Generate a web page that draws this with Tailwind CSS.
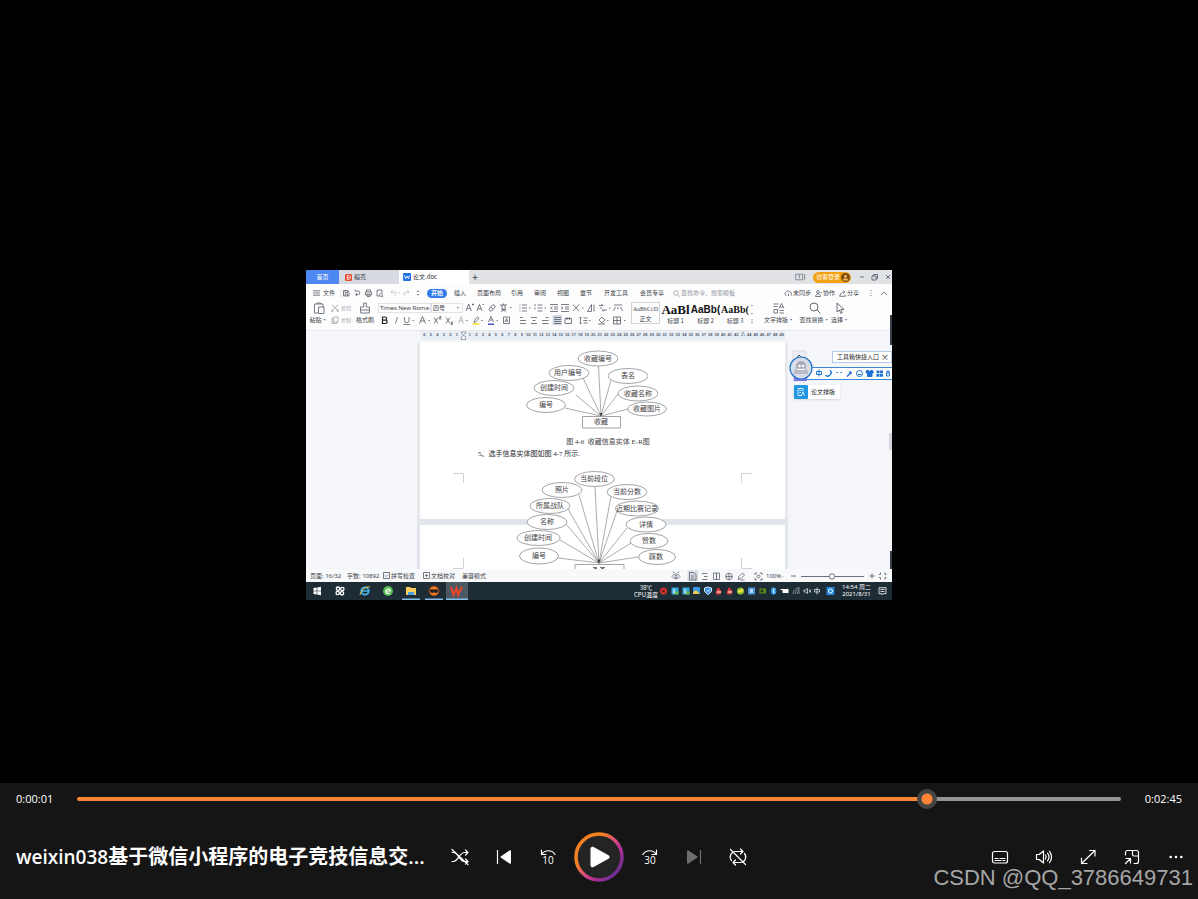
<!DOCTYPE html>
<html lang="zh-CN">
<head>
<meta charset="utf-8">
<meta name="viewport" content="width=device-width, initial-scale=1">
<title>Media Player</title>
<script src="https://cdn.jsdelivr.net/npm/@tailwindcss/browser@4"></script>
</head>
<body class="flex h-screen flex-col overflow-hidden bg-black font-['Open_Sans','Noto_Sans_CJK_SC',sans-serif] text-white">

<main class="flex min-h-0 flex-1 items-center justify-center pt-[87px]">
  <!-- Video frame: recorded desktop with a document editor -->
  <section class="flex h-[330px] w-[586px] flex-col overflow-hidden bg-[#fdfdfe] font-['Noto_Sans_CJK_SC',sans-serif] text-[6px] leading-[8px] whitespace-nowrap text-[#3b3f48]" aria-label="视频画面">

    <!-- Tab strip -->
    <div class="flex h-[14px] shrink-0 items-center bg-[#e0e2e5]">
      <button class="h-full w-[33px] bg-[#4d87f2] text-white">首页</button>
      <button class="flex h-full w-[60px] items-center gap-[2px] bg-[#d7dae0] pl-[6px]">
        <svg class="size-[7px]" viewBox="0 0 7 7"><rect width="7" height="7" rx="1.5" fill="#e5482f"/><path d="M2.3 1.5h1.2a2 2 0 0 1 0 4H2.3zM2.3 3.5h2" fill="none" stroke="#fff" stroke-width=".8"/></svg>
        稻壳
      </button>
      <button class="flex h-full w-[70px] items-center gap-[2px] bg-white pl-[4px] text-[#23262c]">
        <svg class="size-[8px]" viewBox="0 0 8 8"><rect width="8" height="8" rx="1" fill="#2272e6"/><path d="M1.4 2.4 2.6 5.6 4 3l1.4 2.6 1.2-3.2" fill="none" stroke="#fff" stroke-width=".9"/></svg>
        论文.doc
      </button>
      <button class="w-[12px] text-[10px] leading-[12px]">+</button>
      <div class="ml-auto flex items-center">
        <svg class="mr-[7px] h-[8px] w-[11px]" viewBox="0 0 11 8" fill="none" stroke="#6e7786" stroke-width=".8"><path d="M.7 1.2h7v5.6h-7zM9.6 1.2v5.6M3.6 2.8l.8-.4v3"/></svg>
        <button class="mr-[9px] flex h-[11px] w-[38px] items-center justify-between rounded-full bg-[#f5a211] pr-[1px] pl-[3px] text-white">访客登录
          <svg class="size-[9px]" viewBox="0 0 9 9"><circle cx="4.500" cy="4.500" r="4.500" fill="#7b4a10"/><circle cx="4.500" cy="3.300" r="1.500" fill="#f0b756"/><path d="M1.800 7.500a2.700 2.300 0 0 1 5.400 0" fill="#f0b756"/></svg>
        </button>
        <svg class="h-[8px] w-[32px]" viewBox="0 0 32 8" fill="none" stroke="#596273" stroke-width=".9"><path d="M0 4h4M12 3h4v4h-4zM13.500 3V1.500h4v4H16M26 2l4 4M30 2l-4 4"/></svg>
      </div>
    </div>

    <!-- Menu row -->
    <div class="flex h-[17px] shrink-0 items-center pt-[1px]">
      <button class="flex w-[34px] items-center gap-[3px] pl-[7px]">
        <svg class="h-[6px] w-[7px]" viewBox="0 0 7 6" stroke="#555b66" stroke-width=".8"><path d="M0 .8h7M0 3h7M0 5.200h7"/></svg>文件
      </button>
      <svg class="h-[10px] w-[87px] shrink-0" viewBox="34 0 87 10" fill="none" stroke="#5a606b" stroke-width=".8">
        <path d="M35 1v8" stroke="#d5d8dd"/>
        <path d="M37.500 2.500h4l1.500 1.500v4h-5.500zM39 2.500v2h2.500v-2M39 8V6h2.500v2"/>
        <path d="M49 3h3a1.800 1.800 0 0 1 0 3.600h-2M51 5l-1.500 1.600L51 8.200M49 3V1.800"/>
        <path d="M60.500 4V2h4v2M59.500 4h6v3h-6zM61 6h3v2.500h-3z"/>
        <path d="M76 5V2h-5v6h3M75 5.500a1.500 1.500 0 1 0 .1 0M76 8l1.200 1"/>
        <g stroke="#b9bdc5"><path d="M85 4h3.500a1.600 1.600 0 0 1 0 3.200M86.500 2.300 85 4l1.500 1.700M103 4h-3.500a1.600 1.600 0 0 0 0 3.200M101.500 2.300 103 4l-1.500 1.700M92 4.500h2"/></g>
        <path d="M111 4l1.200-1.200L113.400 4M111 6l1.200 1.200L113.400 6"/>
      </svg>
      <button class="mr-[7px] h-[9px] w-[20px] rounded-full bg-[#3179e8] font-bold text-white">开始</button>
      <button class="w-[23px] text-left">插入</button>
      <button class="w-[34px] text-left">页面布局</button>
      <button class="w-[23px] text-left">引用</button>
      <button class="w-[23px] text-left">审阅</button>
      <button class="w-[23px] text-left">视图</button>
      <button class="w-[24px] text-left">章节</button>
      <button class="w-[36px] text-left">开发工具</button>
      <button class="w-[33px] text-left">会员专享</button>
      <label class="flex w-[80px] items-center gap-[1px] text-[#8d929b]">
        <svg class="size-[7px]" viewBox="0 0 7 7" fill="none" stroke="#8d929b" stroke-width=".7"><circle cx="3" cy="3" r="2.300"/><path d="m4.700 4.700 2 2"/></svg>
        <input class="w-[60px] placeholder:text-[#8d929b]" placeholder="查找命令、搜索模板">
      </label>
      <div class="ml-auto flex items-center gap-[4px] pr-[3px]">
        <button class="flex items-center gap-[1px]"><svg class="size-[8px]" viewBox="0 0 8 8" fill="none" stroke="#5a606b" stroke-width=".8"><path d="M2.500 6.500a1.800 1.800 0 0 1-.2-3.500 2.200 2.200 0 0 1 4 .4 1.500 1.500 0 0 1 .3 3M4.500 4.500v2.500"/></svg>未同步</button>
        <button class="flex items-center gap-[1px]"><svg class="size-[7px]" viewBox="0 0 7 7" fill="none" stroke="#5a606b" stroke-width=".8"><circle cx="3" cy="2" r="1.400"/><path d="M.6 6.500c0-3.500 5-3.500 5 0zM5.500 2.500h1.500"/></svg>协作</button>
        <button class="flex items-center gap-[1px]"><svg class="size-[7px]" viewBox="0 0 7 7" fill="none" stroke="#5a606b" stroke-width=".8"><path d="M1.500 3.500.7 6.300h5.600L6 4.500M2 4.500C2.500 2.500 4 2 5.500 2M4.300.6 5.800 2 4.300 3.400"/></svg>分享</button>
        <svg class="ml-[6px] h-[8px] w-[20px]" viewBox="0 0 20 8" fill="none" stroke="#5a606b" stroke-width=".8"><path d="M2 1v1M2 3.500v1M2 6v1M12 6l3-3 3 3"/></svg>
      </div>
    </div>

    <!-- Ribbon -->
    <div class="flex h-[30px] shrink-0 border-b border-[#e6e8ec] pt-[1px] text-[5px]">
      <button class="flex w-[25px] flex-col items-center gap-[2px] text-[6px]">
        <svg class="h-[12px] w-[12px]" viewBox="0 0 12 12" fill="none" stroke="#666c77" stroke-width=".9"><path d="M5 11H1.500V2H10v3M4 2V1h3.500v1M5.500 5H11v6.500H5.500z"/></svg>粘贴·
      </button>
      <div class="flex w-[23px] flex-col gap-[4px] pt-[2px] text-[#a3a7ae]">
        <button class="flex items-center gap-[2px]"><svg class="size-[8px]" viewBox="0 0 8 8" fill="none" stroke="#999ea7" stroke-width=".8"><path d="m1 1 6 5.500M7 1 1 6.500"/><circle cx="1.300" cy="6.800" r=".8"/><circle cx="6.700" cy="6.800" r=".8"/></svg>剪切</button>
        <button class="flex items-center gap-[2px]"><svg class="size-[8px]" viewBox="0 0 8 8" fill="none" stroke="#999ea7" stroke-width=".8"><path d="M2.500 1h4.500v5H2.500zM2.500 2.500H1v5h4.500V6"/></svg>复制</button>
      </div>
      <button class="flex w-[22px] flex-col items-center gap-[2px] text-[6px]">
        <svg class="h-[12px] w-[12px]" viewBox="0 0 12 12" fill="none" stroke="#666c77" stroke-width=".9"><path d="M4.700 1h2.600v4h3.200v3h-9V5h3.200zM1.700 8v3h8.600V8"/></svg>格式刷
      </button>
      <div class="flex w-[252px] flex-col pl-[2px]">
        <div class="flex h-[12px] items-center">
          <button class="flex h-[10px] w-[53px] items-center justify-between border border-[#e2e4e8] pl-[1px] font-['Noto_Sans','Noto_Sans_CJK_SC',sans-serif] text-[6px]">Times New Roma<span>·</span></button>
          <button class="flex h-[10px] w-[32px] items-center justify-between border border-[#e2e4e8] pr-[1px] pl-[1px] text-[6px]">四号<span>·</span></button>
          <svg class="h-[12px] w-[165px]" viewBox="463 302 165 12" fill="none" stroke="#565c67" stroke-width=".8">
            <path d="m466 311 2.700-7 2.700 7M467 308.500h3.500M472 304.500h2M473 303.500v2M477 311l2.500-6.500 2.500 6.500M478 308.700h3M482.500 304.500h1.500M489 309l4-4.500 2.500 2-4 4.500h-1.500zM490.500 307l2.500 2M500 305h7M502 305v3M505 305v3M503.500 303.500v1.500M501 309h5l-5 2.500M502 309l4 2.500M510 307.500h1.500"/>
            <path d="M519.500 305h1M519.500 308h1M519.500 311h1M522 305h5M522 308h5M522 311h5M529 308h1.500M535 304v2M535 307.500v2M537.500 305h5M537.500 308h5M537.500 311h5M544.500 308h1.500M550 304.500h8M554 307h4M554 309h4M550 311.500h8M552.500 306.500 550.500 308l2 1.500M561 304.500h8M565 307h4M565 309h4M561 311.500h8M561 306.500l2 1.500-2 1.500M573 304.500l6 6.500M579 304.500l-6 6.500M582 308h1.500M587.500 311.500l4-7v7zM594 304.500v7M599 305.500h4l-1.500-1.500M607 310h-5l1.500 1.500M601 309v-2M609 308h1.500M614 305h8M614 308h2M617 308h2M620 308h2M614 311v-2M622 311v-2"/>
          </svg>
        </div>
        <div class="flex h-[12px] items-center">
          <svg class="h-[12px] w-[250px]" viewBox="378 313 250 12" fill="none" stroke="#565c67" stroke-width=".8">
            <path d="M382.500 316h2.500a1.500 1.500 0 0 1 0 3.200h-2.500zM382.500 319.200h3a1.600 1.600 0 0 1 0 3.300h-3z" stroke="#222" stroke-width="1.200"/>
            <path d="m397.500 316-2 6.500M404.500 316v3.500a2.200 2.200 0 0 0 4.500 0V316M403.500 323.500h6.500M412.500 319.500h1.500M419.500 322.500l3-7 3 7M420.500 320h4M428.500 319.500h1.500M434 316.500l4 6M438 316.500l-4 6M439.500 315.500h1.500v1.200h-1.500v1.300h1.800M446 316.500l4 6M450 316.500l-4 6M451 321h1.500v1.200H451v1.300h1.800"/>
            <path d="m458.500 322.500 2.500-7 2.500 7M459.500 320h3" stroke="#a9adb4"/><path d="M466 319.500h1.500M481 319.500h1.500M496.500 319.500h1.500"/>
            <path d="m474 320 3.500-4 1.500 1.300-3.500 4h-1.500z"/><path d="M472.500 323h7" stroke="#f0e51a" stroke-width="1.500"/>
            <path d="m488.500 321 2.500-5.500 2.500 5.500M489.500 319h3"/><path d="M488 323.200h6" stroke="#2635b5" stroke-width="1.300"/>
            <path d="M503.500 316h6v6.500h-6zM505 321l1.500-3.500L508 321M505.500 320h2"/>
            <path d="M552.500 314h9.500v10h-9.500z" fill="#d3d8e2" stroke="none"/>
            <path d="M520 316.500h3M520 319.500h6M520 322.500h6M531 316.500h6M532.500 319.500h3M531 322.500h6M545.500 316.500h3M542 319.500h6.500M542 322.500h6.500M554 316.500h7M554 318.500h7M554 320.500h7M554 322.500h7M565 322.500v-5h6.500v5zM567 316v3M569.500 316v3M580.500 316v7M579.500 317l1-1 1 1M579.500 322l1 1 1-1M583.500 317h4M583.500 319.500h4M583.500 322h4M589 319.500h1.500M599 319l3-3 3 3-3 3zM598 323h7M607 319.500h1.500M613.500 316h7v7h-7zM617 316v7M613.500 319.500h7M624 319.500h1.500"/>
          </svg>
        </div>
      </div>
      <div class="flex w-[129px] gap-[1px] pl-[3px] text-[6px]">
        <button class="flex h-[22px] w-[29px] flex-col items-center justify-end overflow-hidden border border-[#d2d5da] font-['Liberation_Serif','Noto_Sans_CJK_SC',serif]"><span class="h-[10px]">AaBbCcD</span><span class="font-['Noto_Sans_CJK_SC',sans-serif]">正文</span></button>
        <button class="flex w-[29px] flex-col items-center overflow-hidden text-[#111]"><span class="h-[15px] font-['Liberation_Serif',serif] text-[13px] leading-[16px] font-bold">AaBl</span><span class="text-[#3b3f48]">标题 1</span></button>
        <button class="flex w-[29px] flex-col items-center overflow-hidden text-[#111]"><span class="h-[15px] font-['Liberation_Sans',sans-serif] text-[10px] leading-[15px] font-bold">AaBb(</span><span class="text-[#3b3f48]">标题 2</span></button>
        <button class="flex w-[28px] flex-col items-center overflow-hidden text-[#111]"><span class="h-[15px] font-['Liberation_Serif',serif] text-[10px] leading-[15px] font-bold">AaBb(</span><span class="text-[#3b3f48]">标题 3</span></button>
        <svg class="h-[22px] w-[4px]" viewBox="0 0 4 22" fill="none" stroke="#777d88" stroke-width=".7"><path d="m1 4 1-1 1 1M1 11l1 1 1-1M1 18h2M1 20l1 1 1-1"/></svg>
      </div>
      <button class="flex w-[44px] flex-col items-center gap-[2px] text-[6px]">
        <svg class="size-[12px]" viewBox="0 0 12 12" fill="none" stroke="#565c67" stroke-width=".8"><path d="M.5 2h5M.5 4.500h4M6 6.500l2.500-5 2.500 5M7 5h3M1 7.500h3.500V11H1zM6.500 8.500H11M6.500 11H11"/></svg>文字排版·
      </button>
      <button class="flex w-[27px] flex-col items-center gap-[2px] text-[6px]">
        <svg class="size-[12px]" viewBox="0 0 12 12" fill="none" stroke="#565c67" stroke-width=".9"><circle cx="5" cy="5" r="4"/><path d="m8 8 3.500 3.500"/></svg>查找替换·
      </button>
      <button class="flex w-[24px] flex-col items-center gap-[2px] text-[6px]">
        <svg class="size-[12px]" viewBox="0 0 12 12" fill="none" stroke="#565c67" stroke-width=".9"><path d="M3 1v9l2.300-2 1.600 3.500 1.400-.7L6.800 7.500H10z"/></svg>选择·
      </button>
    </div>

    <!-- Ruler -->
    <div class="flex h-[9px] shrink-0 bg-[#f4f6f9] pl-[115px] text-center font-['Liberation_Sans',sans-serif] text-[4px] leading-[8px] font-bold text-[#555b6a]">
      <div class="grid w-[364px] grid-cols-56 bg-[#e9edf5]">
        <span>6</span><span>5</span><span>4</span><span>3</span><span>2</span><span>1</span>
        <svg class="h-[9px] w-[7px]" viewBox="0 0 7 9" fill="#fff" stroke="#6b7280" stroke-width=".7"><path d="M1.500 1h4v1.500l-2 1.500-2-1.500zM1.500 8.500V6l2-1.500 2 1.500v2.500z"/></svg>
        <span>1</span><span>2</span><span>3</span><span>4</span><span>5</span><span>6</span><span>7</span><span>8</span><span>9</span><span>10</span><span>11</span><span>12</span><span>13</span><span>14</span><span>15</span><span>16</span><span>17</span><span>18</span><span>19</span><span>20</span><span>21</span><span>22</span><span>23</span><span>24</span><span>25</span><span>26</span><span>27</span><span>28</span><span>29</span><span>30</span><span>31</span><span>32</span><span>33</span><span>34</span><span>35</span><span>36</span><span>37</span><span>38</span><span>39</span><span>40</span><span>41</span><span>42</span><span>△</span><span>44</span><span>45</span><span>46</span><span>47</span><span>48</span><span>49</span>
      </div>
    </div>

    <!-- Document pages with entity diagrams -->
    <div class="relative h-[229px] shrink-0 bg-[#f4f6f9]">
      <svg class="h-[229px] w-[586px] font-['Liberation_Serif','Noto_Sans_CJK_SC',serif]" viewBox="306 340 586 229">
        <path d="M417 343h371v177H417z" fill="#e7e9ed"/><path d="M417 519h371v50H417z" fill="#e1e4e8"/>
        <path d="M420 342h365v177H420zM420 525h365v44H420zM527 516h135v12H527z" fill="#fff"/>
        <g fill="none" stroke="#c6c8cc" stroke-width=".8"><path d="M453 473.500h10.500V483M752 473.500h-10.500V483M463.500 558v10M741.500 558v10M453 568.500h10.500M752 568.500h-10.500"/></g>
        <g fill="none" stroke="#85888d" stroke-width=".7">
          <path d="M601 416 598.500 366M601 416 583 378M601 416 576 395M601 416 565 408M601 416 611 380M601 416 618 394M601 416 628 409"/>
          <path d="M599 563 595 487M599 563 579 495M599 563 568 509M599 563 566 524M599 563 560 540M599 563 558 558M599 563 611 496M599 563 617 511M599 563 627 528M599 563 631 543M599 563 638 557"/>
        </g>
        <path d="M599.500 413 601 416.500 602.500 413zM597.500 559.500l1.500 4.500 1.500-4.500z" fill="#444"/>
        <g fill="#fff" stroke="#8b8e93" stroke-width=".8">
          <ellipse cx="598" cy="358.500" rx="20" ry="7.500"/><ellipse cx="569" cy="373" rx="20" ry="7.500"/><ellipse cx="554" cy="388" rx="20" ry="7.500"/><ellipse cx="546" cy="405" rx="19.500" ry="7.500"/><ellipse cx="628" cy="376" rx="20" ry="7.500"/><ellipse cx="638" cy="393.500" rx="20" ry="7.500"/><ellipse cx="647" cy="409" rx="19.500" ry="7"/>
          <path d="M582.500 416.500h38V428h-38zM575 569v-4.500h49v4.500"/>
          <ellipse cx="594.500" cy="479" rx="20" ry="7.500"/><ellipse cx="562" cy="490" rx="20" ry="7.500"/><ellipse cx="550" cy="506" rx="20" ry="7.500"/><ellipse cx="547" cy="522" rx="20" ry="7.500"/><ellipse cx="538.500" cy="538" rx="21.500" ry="7.500"/><ellipse cx="539" cy="556" rx="19.500" ry="8"/><ellipse cx="627" cy="492" rx="20" ry="7.500"/><ellipse cx="637" cy="508.500" rx="21.500" ry="7.500"/><ellipse cx="646" cy="524.500" rx="20" ry="7.500"/><ellipse cx="649" cy="541" rx="19" ry="7.500"/><ellipse cx="657" cy="557" rx="18.500" ry="7.500"/>
        </g>
        <g class="text-[7px]" text-anchor="middle" fill="#3f4145">
          <text x="598" y="361">收藏编号</text><text x="568" y="375">用户编号</text><text x="554" y="390">创建时间</text><text x="546" y="407">编号</text><text x="628" y="378">表名</text><text x="638" y="396">收藏名称</text><text x="647" y="411">收藏图片</text><text x="601" y="424">收藏</text>
          <text x="594" y="481">当前段位</text><text x="562" y="492">照片</text><text x="550" y="508">所属战队</text><text x="547" y="524">名称</text><text x="538" y="540">创建时间</text><text x="539" y="558">编号</text><text x="627" y="494">当前分数</text><text x="637" y="511">近期比赛记录</text><text x="646" y="527">详情</text><text x="649" y="543">赞数</text><text x="656" y="559">踩数</text>
          <text x="608" y="444">图 4-6&#160; 收藏信息实体 E-R图</text>
        </g>
        <path d="M593 567.500h4M594 568.500h3M600 567.500h5M601 568.500h3" stroke="#55585e" stroke-width=".8"/>
        <text class="text-[7px]" x="478" y="456" fill="#26282c">5、选手信息实体图如图 4-7 所示.</text>
      </svg>
      <!-- Floating helpers -->
      <div class="absolute top-[11px] right-0 flex h-[12px] w-[60px] items-center justify-between border border-[#b5cbe6] bg-white pr-[2px] pl-[4px] text-[#222]">工具箱快捷入口<button class="text-[8px]" aria-label="关闭">×</button></div>
      <div class="absolute top-[27px] right-0 h-[13px] w-[94px] rounded-l-full border border-r-0 border-[#3d86d6] bg-white">
        <svg class="h-[11px] w-[93px]" viewBox="799 368 93 11" fill="none" stroke="#1e73d2" stroke-width="1"><path d="M816.500 371.500h5v3h-5zM819 369.500v7M836.500 372.500h1.500M840.500 372.500h1.500"/><path d="M830 370a3.400 3.400 0 0 1-4.500 5.500c3 2 7.500-1.500 4.500-5.500zM866.500 370.500h1.500l1.500 1 1.500-1h1.500l1 2-1.500 1v3h-4.500v-3l-1.500-1z" fill="#1e73d2"/><path d="m847 376.500 3.500-3.500M850 371v2h2" stroke-width="1.500"/><circle cx="859.500" cy="373.500" r="3"/><path d="M858 374.500h3M886.500 373h3v3h-3zM887 373v-2h2v2"/><path d="M876.500 370.500h3v2.700h-3zM880 370.500h3v2.700h-3zM876.500 374h3v2.700h-3zM880 374h3v2.700h-3z" fill="#1e73d2" stroke="none"/></svg>
      </div>
      <svg class="absolute top-[10px] left-[483px] h-[32px] w-[26px]" viewBox="789 350 26 32"><rect x="793" y="351" width="13" height="30" rx="1" fill="#eceef3" stroke="#d0d3da" stroke-width=".7"/><path d="M794 377h13v4h-13z" fill="#8677e8"/><path d="m797 357 2-2 2 2" fill="none" stroke="#555"/><circle cx="801" cy="368" r="11" fill="#d9dde8" stroke="#1e73c8" stroke-width="1.200"/><path d="M794 372a7 5 0 0 1 14 0v2h-14z" fill="#b9b9c6"/><path d="M796 368v-2a5 5 0 0 1 10 0v2z" fill="#a9a9b8"/><circle cx="799.500" cy="366" r="1.300" fill="#fff"/><circle cx="803" cy="366" r="1.300" fill="#fff"/><path d="M797 369.500h8" stroke="#fff"/></svg>
      <button class="absolute top-[45px] left-[488px] flex h-[14px] w-[46px] items-center gap-[3px] bg-white text-[#222] shadow">
        <svg class="size-[14px]" viewBox="0 0 14 14"><rect width="14" height="14" rx="1" fill="#2196e3"/><path d="M8 10.500H4v-7h5v3M5.500 5.500h2M5.500 7.500h1.500M7.500 10.500 9 7l1.500 3.500" fill="none" stroke="#fff" stroke-width=".8"/></svg>论文排版
      </button>
      <div class="absolute top-[-25px] right-0 h-[30px] w-[2px] bg-[#35404a]"></div>
      <div class="absolute top-[93px] right-0 h-[17px] w-[3px] bg-[#d3d6db]"></div>
      <div class="absolute right-0 bottom-0 h-[18px] w-[2px] bg-[#35404a]"></div>
    </div>

    <!-- Status bar -->
    <div class="flex h-[13px] shrink-0 items-center bg-[#f8f9fb] pl-[4px] text-[6px]">
      <span class="w-[37px] font-['Noto_Sans','Noto_Sans_CJK_SC',sans-serif]">页面: 16/32</span>
      <span class="w-[36px] font-['Noto_Sans','Noto_Sans_CJK_SC',sans-serif]">字数: 10892</span>
      <button class="flex w-[40px] items-center gap-[1px]"><svg class="size-[7px]" viewBox="0 0 7 7" fill="none" stroke="#555b66" stroke-width=".8"><path d="M.5.5h6v6h-6zM2 3.500l1 1 2-2"/></svg>拼写检查</button>
      <button class="flex w-[39px] items-center gap-[1px]"><svg class="size-[7px]" viewBox="0 0 7 7" fill="none" stroke="#555b66" stroke-width=".8"><path d="M.5.5h6v6h-6zM2 3.500h3M3.500 2v3"/></svg>文档校对</button>
      <button>兼容模式</button>
      <svg class="ml-auto h-[12px] w-[92px]" viewBox="671 569 92 12" fill="none" stroke="#5b616d" stroke-width=".8">
        <path d="M687.500 569.500h10.500v11h-10.500z" fill="#d6dae2" stroke="none"/>
        <path d="M672 575.500c2-3.500 6-3.500 8 0-2 3-6 3-8 0zM674 572l-.7-1.500M678 572l.7-1.500"/><circle cx="676" cy="575.500" r="1.200"/>
        <path d="M689.500 571.500h4l2.500 2v5.500h-6.500zM691 575h3M691 577h3M702 572.500h5.500M704 575.500h3.500M702 578.500h5.500M713.500 572h3v6.500h-3zM716.500 572h3v6.500h-3z"/>
        <circle cx="729" cy="575.500" r="3.300"/><path d="M725.500 575.500h7M729 572v7M738 578.500l1-3 3.500-3.500 2 2-3.500 3.500zM740.500 579h4M755 572v2M755 572h2M762 572h-2M762 572v2M755 579v-2M755 579h2M762 579v-2M762 579h-2"/><circle cx="758.500" cy="575.500" r="1.500"/>
      </svg>
      <span class="ml-[3px] w-[22px] font-['Noto_Sans',sans-serif]">100% ·</span>
      <svg class="h-[8px] w-[104px]" viewBox="788 571 104 8" fill="none" stroke="#5b616d" stroke-width=".9"><path d="M791 575h5M801 575.500h63M869.500 575h5M872 572.500v5M880.500 571.500v2h-1.500M885 571.500v2h1.500M880.500 578.500v-2h-1.500M885 578.500v-2h1.500"/><circle cx="832" cy="575.500" r="2.700" fill="#fff"/></svg>
    </div>

    <!-- Taskbar -->
    <div class="flex h-[18px] shrink-0 items-center bg-[#1e2c35] text-white">
      <svg class="h-[18px] w-[166px]" viewBox="306 582 166 18">
        <path d="M446 582h22v18h-22z" fill="#4d5962"/><path d="M402 598.500h18v1.500h-18zM425 598.500h18v1.500h-18zM446 598.500h22v1.500h-22z" fill="#86bce9"/>
        <path d="m313.500 588 3.200-.5v3.200h-3.200zM317.300 587.400l3.700-.6v3.900h-3.700zM313.500 591.300h3.200v3.200l-3.200-.5zM317.300 591.300h3.700v3.900l-3.700-.6z" fill="#fff"/>
        <g fill="none" stroke="#fff" stroke-width="1.300"><circle cx="338" cy="588.700" r="1.700"/><circle cx="342.300" cy="589" r="1.700"/><circle cx="342" cy="593.300" r="1.700"/><circle cx="337.700" cy="593" r="1.700"/></g>
        <circle cx="365" cy="591" r="3.700" fill="none" stroke="#46b7ec" stroke-width="1.800"/><path d="M362 591h6" stroke="#46b7ec" stroke-width="1.500"/><path d="M360 595c1-5 6-9 10-8" fill="none" stroke="#edc648"/>
        <circle cx="388" cy="591" r="5" fill="#55bc50"/><path d="M386 591h4.500a2.300 2.300 0 1 0-.8 2" fill="none" stroke="#fff" stroke-width="1.200"/>
        <path d="M406 587h4l1 1h5v7h-10z" fill="#f7ce5b"/><path d="M408 592h6v3h-6z" fill="#4aa0e0"/>
        <circle cx="434" cy="591" r="5" fill="#ef7b25"/><path d="M429.500 589.500h9l-1 3-2.500.4-1-1-1 1-2.500-.4z" fill="#202020"/><circle cx="434" cy="591" r="5" fill="none" stroke="#67331b" stroke-width=".8"/>
        <path d="m451 587 2.500 8 3-7 1.500 7 4-8" fill="none" stroke="#ed4528" stroke-width="2"/>
      </svg>
      <div class="ml-auto flex w-[24px] flex-col items-center text-[6px] leading-[7px]"><span>38℃</span><span>CPU温度</span></div>
      <svg class="mr-[6px] h-[18px] w-[178px]" viewBox="657 582 178 18">
        <circle cx="662.500" cy="591" r="3.500" fill="#d6342e"/><path d="M661 589.500l3 3M664 589.500l-3 3" stroke="#3c1010"/>
        <path d="M670.500 587.500h7v7h-7zM681.500 587.500h7v7h-7z" fill="#35a9de"/><path d="M673 589v4h3M684 589v4h3" fill="none" stroke="#fff"/><path d="M674 591.500h3.500v3H674zM685 591.500h3.500v3H685z" fill="#60b84a"/>
        <path d="M692 587h7v7h-7z" fill="#3995e6"/><path d="M692 594v-2l3-2 4 4z" fill="#e9ca54"/>
        <path d="m707 587 3.500 1v3.500l-3.500 3-3.500-3V588z" fill="#3d8de8" stroke="#d9ebff"/><path d="M706 590.500l1 1 1.500-2" fill="none" stroke="#fff"/>
        <path d="M717 587l3.500 4.500-1 3h-4l-1-2zM728 587l3.500 4.500-1 3h-4l-1-2z" fill="#d93b3c"/><path d="M716 592h4M727 592h4" stroke="#fff"/>
        <circle cx="739.500" cy="591" r="3.500" fill="#8bc52e"/><path d="M737 592l5-2" stroke="#fae14c" stroke-width="2"/>
        <path d="M747 587.500h7v7h-7z" fill="#4c92dd"/><path d="M749 589h3v4h-3z" fill="#b4d4f8"/>
        <path d="M758.500 588.500h6.500v5h-6.500z" fill="#5b8c24"/><circle cx="761" cy="591" r="1.500" fill="#20320f"/>
        <ellipse cx="772.500" cy="591" rx="2.800" ry="3.800" fill="#1686df"/><path d="m771 589.500 3 3-1.500 1.500v-6L774 589.500l-3 3" fill="none" stroke="#fff" stroke-width=".6"/>
        <path d="M781.500 589h6v4h-6z" fill="#fff"/><path d="M779.500 589.500h3" stroke="#fff"/>
        <g fill="none" stroke="#dce0e4" stroke-width=".8"><path d="M792 594a6 6 0 0 1 6-6M794 594a4 4 0 0 1 4-4M796 594a2 2 0 0 1 2-2M798 587v7" opacity=".6"/><path d="M803 590h1.500l2-1.500v5l-2-1.500H803zM808 589.500l2 3M810 589.500l-2 3M813.500 589.500h5v2.500h-5zM816 587.500v7"/></g>
        <path d="M825.500 587h8v8h-8z" fill="#2687df"/><circle cx="829.500" cy="591" r="2" fill="none" stroke="#fff"/>
      </svg>
      <time class="w-[29px] text-center font-['Noto_Sans','Noto_Sans_CJK_SC',sans-serif] text-[6px] leading-[7px]">14:54 周二<br>2021/8/31</time>
      <svg class="h-[8px] w-[21px]" viewBox="0 0 21 8" fill="none" stroke="#fff" stroke-width=".8"><path d="M8 .7h7v6h-3l-1 1v-1H8zM9.500 2.500h4M9.500 4.500h4"/></svg>
    </div>
  </section>
</main>

<!-- Transport bar -->
<footer class="relative shrink-0 bg-[#151515]">
  <div class="flex h-8 items-center px-4 text-[11px]">
    <time class="w-[61px]">0:00:01</time>
    <input type="range" min="0" max="1000" value="820" aria-label="播放进度" class="h-5 min-w-0 flex-1 appearance-none bg-transparent [&::-webkit-slider-runnable-track]:h-1 [&::-webkit-slider-runnable-track]:rounded-full [&::-webkit-slider-runnable-track]:bg-[linear-gradient(to_right,#ff8433_81.4%,#949494_81.4%)] [&::-webkit-slider-thumb]:-mt-2 [&::-webkit-slider-thumb]:size-5 [&::-webkit-slider-thumb]:appearance-none [&::-webkit-slider-thumb]:rounded-full [&::-webkit-slider-thumb]:bg-[radial-gradient(circle,#ff8433_5px,#454545_6px)]">
    <time class="w-[61px] text-right">0:02:45</time>
  </div>
  <div class="grid h-[84px] grid-cols-[1fr_auto_1fr] items-center">
    <h1 class="flex items-baseline pl-4 text-[20px] leading-7 font-bold whitespace-nowrap"><span class="text-[19px] font-semibold">weixin038</span><span>基于微信小程序的电子竞技信息交</span><span class="font-semibold">...</span></h1>
    <div class="flex items-center">
      <button class="flex h-11 w-11 items-center justify-center" aria-label="随机播放">
        <svg class="size-5" viewBox="0 0 20 20" fill="none" stroke="#fff" stroke-width="1.200" stroke-linecap="round" stroke-linejoin="round"><path d="M2 14.500h1.500c4.500 0 6-9 11-9H18M15.500 3l2.500 2.500L15.500 8M2 5.500h1.500c4.500 0 6 9 11 9H18M15.500 12l2.500 2.500-2.500 2.500M2 2.500l16 15"/></svg>
      </button>
      <button class="flex h-11 w-11 items-center justify-center" aria-label="上一个">
        <svg class="size-5" viewBox="0 0 20 20"><path d="M3.500 3v14" stroke="#fff" stroke-width="1.200"/><path d="M17 4.200v11.600c0 .8-.8 1.200-1.500.7l-8.500-5.700c-.6-.4-.6-1.200 0-1.600l8.500-5.700c.7-.5 1.500-.1 1.500.7z" fill="#fff"/></svg>
      </button>
      <button class="flex h-11 w-11 items-center justify-center" aria-label="后退 10 秒">
        <svg class="size-5" viewBox="0 0 20 20" fill="none" stroke="#fff" stroke-width="1.200" stroke-linecap="round" stroke-linejoin="round"><path d="M3.500 3v4.500H8M3.500 7.500C7 2.500 14 2.500 17 7.500"/><text x="10" y="17" text-anchor="middle" fill="#fff" stroke="none" class="font-['Open_Sans',sans-serif] text-[10px] font-medium">10</text></svg>
      </button>
      <button class="mx-[4px] flex size-[50px] items-center justify-center" aria-label="播放">
        <svg class="size-[50px]" viewBox="0 0 50 50"><defs><linearGradient id="ring" x1="0.100" y1="0.150" x2="0.900" y2="0.850"><stop offset="0.250" stop-color="#f58220"/><stop offset="0.550" stop-color="#d8458a"/><stop offset="0.700" stop-color="#b52f92"/><stop offset="1" stop-color="#6b2e92"/></linearGradient></defs><circle cx="25" cy="25" r="23" fill="#242424" stroke="url(#ring)" stroke-width="3.500"/><path d="M16.500 16.800c0-1.700 1.600-2.600 3.100-1.800l14.900 8.200c1.500.8 1.500 2.800 0 3.600L19.600 35c-1.500.8-3.100-.1-3.100-1.800z" fill="#fff"/></svg>
      </button>
      <button class="flex h-11 w-11 items-center justify-center" aria-label="前进 30 秒">
        <svg class="size-5" viewBox="0 0 20 20" fill="none" stroke="#fff" stroke-width="1.200" stroke-linecap="round" stroke-linejoin="round"><path d="M16.500 3v4.500H12M16.500 7.500C13 2.500 6 2.500 3 7.500"/><text x="10" y="17" text-anchor="middle" fill="#fff" stroke="none" class="font-['Open_Sans',sans-serif] text-[10px] font-medium">30</text></svg>
      </button>
      <button class="flex h-11 w-11 items-center justify-center" aria-label="下一个" disabled>
        <svg class="size-5" viewBox="0 0 20 20"><path d="M16.500 3v14" stroke="#6e6e6e" stroke-width="1.200"/><path d="M3 4.200v11.600c0 .8.8 1.200 1.500.7l8.500-5.700c.6-.4.6-1.200 0-1.600L4.500 3.500C3.800 3 3 3.400 3 4.200z" fill="#6e6e6e"/></svg>
      </button>
      <button class="flex h-11 w-11 items-center justify-center" aria-label="重复播放">
        <svg class="size-5" viewBox="0 0 20 20" fill="none" stroke="#fff" stroke-width="1.200" stroke-linecap="round" stroke-linejoin="round"><path d="M12.500 2 15 4.500 12.500 7M15 4.500H7.500A5.500 5.500 0 0 0 3.500 13.500M7.500 18 5 15.500 7.500 13M5 15.500h7.500a5.500 5.500 0 0 0 4-9M2.500 2.500l15 15"/></svg>
      </button>
    </div>
    <div class="flex items-center justify-end">
      <button class="flex h-11 w-11 items-center justify-center" aria-label="字幕">
        <svg class="size-5" viewBox="0 0 20 20" fill="none" stroke="#fff" stroke-width="1.200" stroke-linecap="round"><rect x="2.500" y="4.500" width="15" height="11.500" rx="2"/><path d="M5 11.500h3M10 11.500h5M5 13.500h6M13 13.500h2"/></svg>
      </button>
      <button class="flex h-11 w-11 items-center justify-center" aria-label="音量">
        <svg class="size-5" viewBox="0 0 20 20" fill="none" stroke="#fff" stroke-width="1.200" stroke-linecap="round" stroke-linejoin="round"><path d="M2.500 7.500h2.700L9.500 4v12l-4.300-3.500H2.500zM11.500 8a3.500 3.500 0 0 1 0 4M13.500 6.200a6 6 0 0 1 0 7.600M15.500 4.300a9 9 0 0 1 0 11.400"/></svg>
      </button>
      <button class="flex h-11 w-11 items-center justify-center" aria-label="全屏">
        <svg class="size-5" viewBox="0 0 20 20" fill="none" stroke="#fff" stroke-width="1.200" stroke-linecap="round" stroke-linejoin="round"><path d="M11.500 3.500H17V9M17 3.500 3.500 16.500M3.500 11v5.500H9"/></svg>
      </button>
      <button class="flex h-11 w-11 items-center justify-center" aria-label="迷你播放器">
        <svg class="size-5" viewBox="0 0 20 20" fill="none" stroke="#fff" stroke-width="1.200" stroke-linecap="round" stroke-linejoin="round"><path d="M3.500 8V5.500a2 2 0 0 1 2-2h9a2 2 0 0 1 2 2v9a2 2 0 0 1-2 2H12M10.500 3.500v4a1.500 1.500 0 0 0 1.500 1.500h4.500M4 11.500h4.500V16M8.500 11.500l-5 5"/></svg>
      </button>
      <button class="flex h-11 w-11 items-center justify-center" aria-label="更多">
        <svg class="size-5" viewBox="0 0 20 20" fill="#fff"><circle cx="4.700" cy="10" r="1.300"/><circle cx="10" cy="10" r="1.300"/><circle cx="15.300" cy="10" r="1.300"/></svg>
      </button>
    </div>
  </div>
  <p class="pointer-events-none absolute right-[5px] bottom-[9px] font-['Liberation_Sans',sans-serif] text-[22px] leading-6 text-[#a6a6a6]">CSDN @QQ_3786649731</p>
</footer>
</body>
</html>
